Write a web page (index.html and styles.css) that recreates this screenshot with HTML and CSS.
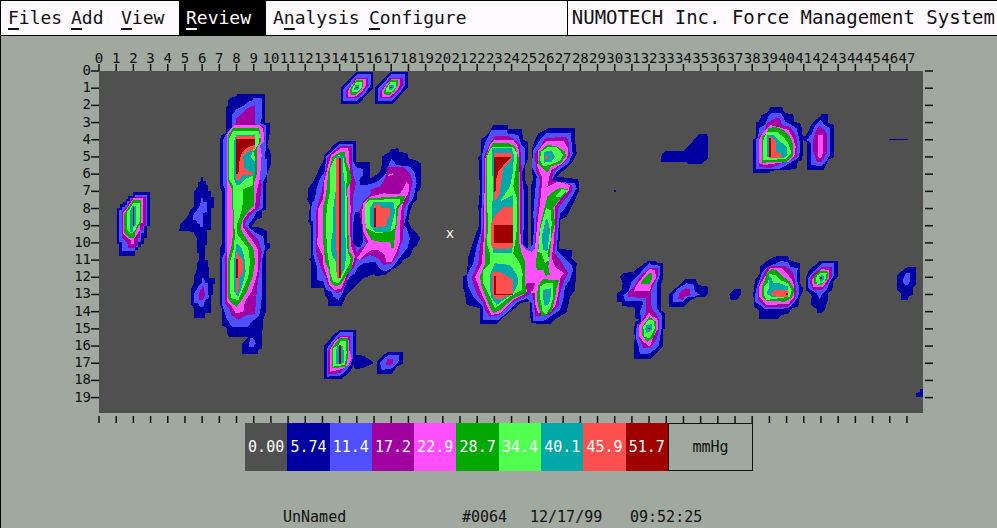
FILE: index.html
```html
<!DOCTYPE html>
<html lang="en">
<head>
  <meta charset="UTF-8">
  <meta name="viewport" content="width=device-width, initial-scale=1.0">
  <title>NUMOTECH Inc. Force Management System</title>
  <link rel="stylesheet" href="styles.css">
</head>
<body>

  <header class="menubar">
    <nav class="menu">
      <button type="button"><u>F</u>iles</button>
      <button type="button"><u>A</u>dd</button>
      <button type="button"><u>V</u>iew</button>
      <button type="button" class="active"><u>R</u>eview</button>
      <button type="button">A<u>n</u>alysis</button>
      <button type="button"><u>C</u>onfigure</button>
    </nav>
    <h1 class="title">NUMOTECH Inc. Force Management System</h1>
  </header>

  <main>
    <svg class="chart" viewBox="1 36 996 387" role="img" aria-label="Pressure map">
      <rect class="c0" x="99" y="71" width="824" height="342"/>
      <g id="axes"></g>

      <g class="map">
        <!-- columns 2 and 6 -->
        <g transform="translate(70 170) scale(.3333)">
          <polygon class="c1" points="188,67 240,67 240,167 231,167 231,205 222,205 222,222 214,222 214,232 205,232 205,240 196,240 196,258 147,258 147,222 142,222 142,115 150,115 150,103 158,103 158,95 167,95 167,87 175,87 175,78 188,78"/>
          <polygon class="c2" points="196,76 231,76 231,167 222,167 222,188 214,188 214,215 205,215 205,230 196,230 196,244 155,244 155,215 147,215 147,120 155,120 155,112 164,112 164,104 172,104 172,92 180,92 180,84 196,84"/>
          <polygon class="c3" points="196,80 227,80 227,167 218,167 218,180 210,180 210,205 205,205 205,222 193,235 175,235 172,218 155,200 155,125 172,108 180,90"/>
          <polygon class="c4" points="190,85 218,85 218,160 210,160 210,180 200,195 193,205 193,222 184,222 184,212 167,200 159,190 159,128 168,118 180,100"/>
          <polygon class="c5" points="190,90 214,90 214,158 205,170 197,185 193,205 180,205 163,190 163,130 180,105"/>
          <polygon class="c6" points="190,100 210,100 210,155 200,170 196,180 190,188 180,188 172,180 172,125 184,108"/>
          <polygon class="c7" points="197,107 197,165 190,170 190,185 180,185 180,122 188,107"/>
          <polygon class="c9" points="188,112 193,112 193,167 188,167"/>
          <polygon class="c1" points="392,20 400,20 400,33 409,33 409,45 414,45 414,62 422,62 422,80 432,80 432,115 422,115 422,180 412,180 412,225 405,225 405,270 414,270 414,290 418,290 418,325 436,325 436,342 430,342 430,375 422,375 422,430 405,430 405,445 372,445 372,415 362,400 362,360 372,340 372,320 380,300 380,285 388,270 388,250 380,250 380,205 370,185 328,183 330,165 345,150 355,135 362,118 372,110 372,65 384,50 384,38 392,33"/>
          <polygon class="c2" points="393,85 400,85 400,95 410,95 410,125 400,130 400,172 390,172 390,162 382,160 378,150 370,150 370,135 378,125 388,110 393,95"/>
          <polygon class="c2" points="395,325 403,325 405,340 414,340 416,385 405,390 400,410 390,410 385,400 372,398 372,372 385,350 395,340"/>
          <polygon class="c3" points="395,347 400,347 405,375 398,390 386,390 386,370 395,355"/>
        </g>

        <!-- column 8 -->
        <g transform="translate(210 85) scale(.3333)">
          <polygon class="c1" points="82,27 165,27 165,115 180,115 180,145 172,180 182,205 182,240 170,270 168,375 155,378 155,400 142,402 125,425 150,428 170,438 170,475 180,475 180,488 168,500 168,680 160,705 157,742 157,790 145,795 145,808 97,808 97,775 115,757 60,757 50,745 50,728 35,722 35,670 30,660 30,490 35,480 35,320 30,310 30,162 35,150 47,145 47,70 55,60 55,45 65,38 82,32"/>
          <polygon class="c2" points="130,38 155,38 155,100 150,115 168,120 168,180 165,220 172,225 172,265 160,290 158,370 140,380 130,400 115,420 118,430 140,445 160,455 165,490 155,530 155,640 150,685 140,700 125,710 115,725 65,725 50,700 35,655 35,520 45,500 45,310 38,300 38,165 50,145 65,130 65,90 80,72 100,62 115,50 130,45"/>
          <polygon class="c2" points="122,758 132,762 137,775 130,788 118,785 118,772"/>
          <polygon class="c3" points="135,60 135,118 160,122 165,165 150,180 150,280 155,300 148,370 130,380 110,405 105,420 120,440 145,465 155,500 148,560 140,620 135,688 110,690 85,705 65,690 60,675 45,655 45,520 50,500 50,150 65,140 78,115 78,100 95,88 110,70"/>
          <polygon class="c4" points="75,120 150,120 160,130 162,170 150,180 155,210 150,280 140,320 135,370 115,385 100,405 98,425 115,450 130,470 145,495 145,550 135,590 125,620 105,650 100,680 78,685 65,665 50,650 50,150 60,135"/>
          <polygon class="c5" points="70,130 148,130 153,170 140,190 140,270 133,290 132,360 110,385 97,405 92,430 105,455 130,490 135,530 128,575 110,620 95,645 80,665 65,655 55,640 55,520 65,480 70,440 65,310 55,290 55,150"/>
          <polygon class="c6" points="70,137 145,137 150,150 145,180 130,200 135,220 130,270 130,300 100,312 97,370 88,400 80,420 80,445 95,465 115,490 120,530 115,575 100,610 85,645 65,640 60,620 60,530 72,490 75,440 72,420 68,300 58,285 58,160"/>
          <polygon class="c7" points="78,150 135,150 135,180 128,200 122,215 135,230 135,270 110,280 90,300 78,300 72,280 72,170"/>
          <polygon class="c7" points="80,475 95,490 103,515 107,560 98,600 85,635 72,620 72,530"/>
          <polygon class="c8" points="78,153 135,153 135,190 115,200 100,215 103,250 125,262 130,268 95,272 90,285 78,285"/>
          <polygon class="c9" points="78,163 135,163 135,178 110,190 95,205 88,230 85,268 78,268"/>
          <polygon class="c8" points="78,495 85,510 97,520 100,560 88,580 85,620 78,625"/>
          <polygon class="c9" points="78,522 83,522 83,578 78,578"/>
        </g>

        <!-- columns 13 to 18 -->
        <g transform="translate(300 65) scale(.3333)">
          <g id="spot">
            <polygon class="c1" points="170,20 220,20 220,70 205,85 195,95 175,118 122,118 122,68 140,50 155,35"/>
            <polygon class="c2" points="170,28 212,28 212,60 195,85 170,108 130,108 130,72 150,52"/>
            <polygon class="c3" points="165,38 205,38 205,62 190,82 172,98 138,100 138,78 155,58"/>
            <polygon class="c4" points="170,42 198,42 198,60 188,78 165,95 143,95 143,78 155,60"/>
            <polygon class="c5" points="168,45 190,45 190,62 180,78 165,90 150,88 150,75"/>
            <polygon class="c6" points="168,52 185,52 185,68 172,82 155,82 155,72"/>
            <polygon class="c7" points="165,60 178,60 178,70 170,76 163,74"/>
            <polygon class="c9" points="168,66 173,66 173,70 168,70"/>
          </g>
          <use href="#spot" x="103"/>
          <polygon class="c1" points="118,228 168,228 168,290 208,292 210,285 210,340 222,335 240,320 245,300 245,275 270,260 272,252 295,250 298,260 322,265 325,280 345,285 362,295 362,370 350,385 350,405 340,415 330,440 325,470 332,485 340,495 352,505 360,520 352,540 340,550 330,575 310,585 300,600 275,615 255,630 225,633 220,628 190,640 175,655 160,670 140,690 125,722 85,722 85,705 75,690 72,670 32,668 32,588 25,585 32,578 32,480 25,470 30,420 22,405 25,370 40,350 50,330 60,305 70,290 72,270 85,260 100,240"/>
          <polygon class="c2" points="120,236 160,236 160,290 170,308 190,312 190,330 178,345 180,360 212,358 240,345 258,325 268,295 275,282 290,300 330,305 345,325 350,355 340,400 325,420 320,450 312,480 320,490 330,520 322,550 305,570 290,590 275,610 255,620 240,612 225,590 190,595 175,605 165,625 150,635 140,650 125,690 115,705 100,695 95,680 78,675 70,650 50,645 50,600 40,570 40,470 32,465 35,415 45,400 50,370 60,340 75,320 78,275 95,260"/>
          <polygon class="c1" points="165,440 180,440 190,490 190,530 180,548 160,540 158,490"/>
          <polygon class="c3" points="122,243 155,243 155,290 160,330 168,355 160,390 158,430 155,520 165,545 175,575 160,610 148,620 140,650 125,680 110,685 100,675 85,665 78,640 68,620 60,600 48,560 48,440 55,415 65,380 75,330 82,280 95,262"/>
          <polygon class="c4" points="122,250 145,250 148,290 152,340 150,390 152,430 150,500 155,550 165,575 155,610 140,630 125,670 105,675 88,660 80,630 70,600 68,570 52,540 55,430 70,400 72,350 85,300 95,270"/>
          <polygon class="c5" points="120,262 135,262 138,290 150,320 155,345 140,375 143,400 145,430 145,500 148,560 160,575 155,610 140,630 120,660 105,665 92,650 85,610 75,590 72,550 68,520 68,430 78,390 85,320 98,275"/>
          <polygon class="c6" points="115,270 130,275 135,300 142,330 138,370 140,400 140,500 143,560 152,580 148,600 135,620 125,640 115,655 100,650 92,630 88,600 82,560 78,500 80,430 90,380 90,310 105,280"/>
          <polygon class="c7" points="108,272 128,272 130,320 136,370 136,500 138,570 135,610 122,635 110,630 108,590 95,570 93,530 100,490 100,430 108,370"/>
          <polygon class="c8" points="108,278 123,278 123,638 112,638 108,500"/>
          <polygon class="c9" points="118,278 122,278 122,638 118,638"/>
          <polygon class="c3" points="262,305 310,305 330,325 338,350 330,385 325,410 312,430 310,520 300,545 295,570 275,595 250,600 235,580 210,570 190,580 170,585 165,570 180,550 200,540 190,510 185,480 178,440 190,410 215,385 210,375 240,365 258,335"/>
          <polygon class="c4" points="262,330 280,324 280,328 265,334"/>
          <polygon class="c4" points="320,350 328,360 325,385 312,405 305,430 300,480 300,530 290,560 275,590 258,590 255,570 235,555 215,555 200,565 180,585 170,580 185,560 205,530 190,500 185,450 190,415 210,395 250,385 300,388"/>
          <polygon class="c5" points="205,400 315,393 310,410 295,430 290,480 285,500 282,550 275,550 270,530 235,530 215,525 200,500 195,470 195,420"/>
          <polygon class="c6" points="208,405 300,402 300,415 288,430 288,470 285,490 270,500 230,505 200,490 195,470 195,420"/>
          <polygon class="c7" points="220,412 280,412 285,440 275,480 270,500 225,500 210,480 210,430"/>
          <polygon class="c8" points="222,420 240,418 245,430 270,430 270,455 262,460 260,480 245,487 222,487"/>
          <polygon class="c9" points="222,430 228,430 228,485 222,485"/>
        </g>
        <g transform="translate(300 225) scale(.3333)">
          <polygon class="c1" points="120,315 168,315 168,390 190,392 210,405 220,415 205,422 185,430 165,432 160,420 150,440 125,462 72,462 72,360 85,350 100,330"/>
          <polygon class="c2" points="120,322 158,322 158,400 152,420 135,440 120,452 80,455 80,372 100,345"/>
          <polygon class="c3" points="118,333 150,333 152,410 140,420 120,445 85,447 85,375 105,345"/>
          <polygon class="c4" points="120,337 145,337 148,375 155,400 145,420 130,430 115,435 90,440 90,375 105,350"/>
          <polygon class="c5" points="118,340 143,340 143,400 138,425 95,430 95,370"/>
          <polygon class="c6" points="122,348 138,348 140,385 135,420 100,425 100,368 115,362"/>
          <polygon class="c7" points="110,362 130,362 132,415 108,417"/>
          <polygon class="c9" points="117,360 123,360 123,417 117,417"/>
          <polygon class="c1" points="265,380 310,380 310,415 290,425 275,447 230,447 230,410 245,395"/>
          <polygon class="c2" points="265,390 298,390 295,412 275,430 245,435 240,412"/>
          <polygon class="c3" points="262,402 280,402 280,415 268,422 258,418"/>
        </g>

        <!-- columns 22 to 27 -->
        <g transform="translate(460 120) scale(.3333)">
          <polygon class="c1" points="100,15 145,15 145,28 185,28 190,60 203,65 203,120 195,140 195,180 203,200 205,385 212,385 212,200 218,180 215,90 225,60 235,40 265,25 345,25 345,60 350,100 335,130 320,145 300,160 290,170 355,178 358,210 345,240 330,270 320,290 300,300 298,387 335,390 335,415 350,430 345,510 330,530 320,577 290,595 270,612 212,610 210,543 180,550 170,560 120,600 110,612 60,612 60,565 20,555 15,520 8,500 8,470 20,465 25,410 35,380 50,335 58,315 55,260 60,210 55,110 62,105 62,60 85,40"/>
          <polygon class="c2" points="95,30 140,30 140,40 175,45 185,75 195,85 195,130 185,160 192,220 190,375 200,385 218,375 222,330 220,280 225,220 230,170 215,140 220,90 240,60 260,40 332,40 338,100 325,130 290,155 275,180 290,185 345,190 350,205 330,240 315,265 300,280 295,330 290,390 300,400 335,435 340,450 330,480 315,500 310,540 300,570 270,590 250,603 220,603 215,550 200,535 175,545 150,570 115,600 70,600 70,560 40,530 25,500 20,465 40,430 50,380 62,340 65,250 65,110 75,70"/>
          <polygon class="c3" points="105,48 145,48 165,60 180,75 185,140 185,375 198,395 215,400 225,380 228,300 235,240 240,180 228,150 225,100 245,75 255,55 315,50 325,60 330,110 310,130 280,155 275,180 335,195 335,215 310,245 295,265 290,330 285,400 300,420 325,460 315,475 300,520 295,560 270,585 225,590 222,545 215,520 195,530 160,545 120,585 90,590 75,570 70,550 50,520 35,475 55,430 60,380 70,310 72,110 90,70"/>
          <polygon class="c4" points="105,60 160,60 175,80 178,120 182,370 200,390 215,395 225,385 232,310 240,250 245,200 245,170 232,140 235,90 260,62 310,62 325,85 322,115 300,135 275,150 268,170 262,200 295,185 330,195 325,215 300,240 285,260 285,320 280,380 275,415 285,440 312,460 300,475 295,520 285,560 265,580 235,580 225,550 225,520 200,515 190,525 160,540 120,580 95,585 80,555 60,510 45,470 65,430 70,380 72,330 75,120 90,75"/>
          <polygon class="c3" points="200,490 225,490 220,510 205,520 198,505"/>
          <polygon class="c5" points="100,68 140,68 165,78 178,120 178,370 185,400 195,425 197,520 160,535 120,570 100,580 85,550 65,500 60,470 75,430 75,380 78,330 78,110 90,85"/>
          <polygon class="c6" points="95,82 160,82 172,100 170,130 160,200 172,240 172,320 165,370 160,400 180,430 188,460 185,510 150,530 125,550 105,565 90,530 70,490 70,450 90,430 90,400 80,370 85,315 80,240 80,110"/>
          <polygon class="c7" points="97,85 155,85 162,105 158,160 150,200 120,245 160,225 160,260 158,315 157,400 100,400 95,370 95,260 98,240"/>
          <polygon class="c7" points="105,430 150,435 172,465 175,490 160,520 130,540 110,555 92,530 90,465"/>
          <polygon class="c8" points="103,100 157,100 157,115 130,145 122,200 118,225 103,245"/>
          <polygon class="c9" points="103,110 155,110 140,125 115,155 108,180 108,213 103,215"/>
          <polygon class="c8" points="105,285 130,262 158,262 158,385 100,388 92,375 92,315"/>
          <polygon class="c9" points="103,315 158,315 158,370 103,370"/>
          <polygon class="c8" points="95,460 105,455 125,458 160,480 160,520 125,537 105,537 95,515"/>
          <polygon class="c9" points="102,468 107,468 107,521 158,521 158,526 102,526"/>
          <polygon class="c5" points="262,75 290,78 315,95 318,110 300,130 272,140 262,158 250,145 235,130 238,95"/>
          <polygon class="c6" points="265,80 290,80 310,105 300,122 270,135 250,138 240,120 243,95"/>
          <polygon class="c7" points="252,95 275,93 285,110 275,125 252,128"/>
          <polygon class="c8" points="256,108 266,108 262,118 256,118"/>
          <polygon class="c5" points="300,203 325,208 315,225 298,240 280,262 285,310 275,350 270,400 265,440 270,465 258,467 250,450 230,450 228,425 235,380 240,320 252,270 262,230 280,215"/>
          <polygon class="c6" points="305,208 325,210 300,232 285,232"/>
          <polygon class="c6" points="258,265 272,270 275,310 272,360 262,400 268,420 255,430 245,400 235,395 240,330"/>
          <polygon class="c7" points="258,295 264,300 270,330 262,395 250,390 245,350"/>
          <polygon class="c8" points="257,315 262,315 262,332 257,330"/>
          <polygon class="c5" points="250,478 298,480 290,500 285,535 275,575 245,590 235,560 230,530 235,495"/>
          <polygon class="c6" points="240,500 255,490 280,490 280,530 272,560 258,585 248,575 240,530"/>
          <polygon class="c7" points="250,510 272,505 272,530 268,550 255,560 248,530"/>
          <polygon class="c8" points="256,520 262,520 262,526 256,526"/>
        </g>

        <!-- columns 30 to 37 -->
        <g transform="translate(610 125) scale(.3333)">
          <polygon class="c1" points="270,27 290,27 294,35 294,100 275,117 235,117 230,112 152,112 152,95 165,78 220,78 240,60 255,40"/>
          <polygon class="c1" points="11,195 18,195 18,202 11,202"/>
          <polygon class="c1" points="115,407 135,407 140,413 158,413 158,465 152,480 152,555 165,565 165,610 158,615 158,665 140,685 120,702 72,702 72,650 75,640 72,620 75,590 90,585 75,580 75,548 35,542 35,530 22,530 22,505 35,495 38,475 30,455 40,445 70,440 90,425"/>
          <polygon class="c2" points="118,413 125,420 150,422 150,450 140,480 142,550 155,570 155,610 150,640 145,665 120,685 90,688 85,660 78,640 80,600 95,590 90,560 100,535 95,528 45,528 40,510 55,500 65,470 85,450"/>
          <polygon class="c3" points="120,428 143,428 143,455 130,480 122,500 125,550 145,575 148,610 140,640 120,670 100,670 88,640 85,600 100,580 108,560 108,520 55,515 55,502 75,480 90,455"/>
          <polygon class="c4" points="118,432 135,435 138,460 125,478 120,497 72,497 80,480 95,460"/>
          <polygon class="c4" points="118,562 125,575 142,580 145,610 130,635 120,665 100,650 88,635 88,600 105,580"/>
          <polygon class="c5" points="118,443 125,445 125,465 118,478 92,478 98,465"/>
          <polygon class="c5" points="118,575 138,590 138,615 128,640 112,650 95,630 95,605 108,590"/>
          <polygon class="c6" points="115,585 130,585 135,610 120,640 102,635 100,605"/>
          <polygon class="c7" points="110,600 125,598 125,615 112,625 105,612"/>
          <polygon class="c9" points="114,608 119,608 119,613 114,613"/>
          <polygon class="c1" points="225,463 258,463 265,480 293,485 293,505 285,515 260,517 235,530 220,547 178,547 178,507 190,495 212,478"/>
          <polygon class="c2" points="230,475 250,478 255,500 270,508 255,515 235,515 218,530 190,532 190,508 205,490"/>
          <polygon class="c3" points="225,490 240,492 242,510 225,515 218,525 205,522 207,505"/>
          <polygon class="c1" points="375,492 394,492 394,508 380,524 362,524 358,508"/>
        </g>

        <!-- columns 38 to 43 -->
        <g transform="translate(745 100) scale(.3333)">
          <polygon class="c1" points="75,22 112,22 115,33 125,40 145,42 147,65 165,70 172,85 172,105 180,110 190,95 198,75 205,65 225,50 230,42 250,42 250,68 268,75 268,170 250,180 235,210 185,210 185,125 175,120 172,180 158,185 155,205 130,210 75,212 75,218 25,218 25,118 32,115 32,68 42,65 50,45 70,35"/>
          <polygon class="c2" points="80,38 105,38 115,50 120,65 140,75 155,85 160,105 165,130 163,170 150,180 125,195 100,208 32,208 32,120 40,110 42,85 60,75 70,50"/>
          <polygon class="c2" points="228,60 238,75 255,85 255,165 240,190 228,198 198,195 198,130 185,120 200,100 212,75"/>
          <polygon class="c3" points="90,55 105,55 110,75 135,80 150,100 158,130 155,170 140,180 110,190 80,203 42,202 42,110 60,90 65,70"/>
          <polygon class="c3" points="222,78 238,90 245,100 245,160 230,185 215,185 205,155 203,125 212,95"/>
          <polygon class="c4" points="75,75 95,80 130,90 145,115 152,140 148,170 130,185 60,195 42,190 42,120 52,100"/>
          <polygon class="c4" points="218,105 235,105 235,155 228,175 218,170"/>
          <polygon class="c5" points="70,85 90,80 115,90 135,110 145,135 145,165 125,185 50,188 50,110 65,100"/>
          <polygon class="c6" points="65,95 95,95 115,110 130,130 140,160 125,175 110,178 55,180 55,120"/>
          <polygon class="c7" points="65,105 85,105 100,120 125,140 128,165 115,175 65,172"/>
          <polygon class="c8" points="72,108 82,112 92,125 92,155 108,160 108,173 72,173"/>
          <polygon class="c9" points="72,115 77,115 77,172 72,172"/>
          <polygon class="c1" points="95,468 130,468 132,480 165,490 165,550 175,565 172,580 165,590 160,620 140,625 130,640 110,645 95,658 42,658 42,630 27,620 25,580 30,540 45,520 45,500 70,480"/>
          <polygon class="c2" points="110,483 130,488 135,500 158,505 155,540 163,560 160,590 145,610 130,625 60,628 45,615 30,605 32,570 40,550 50,520 70,500"/>
          <polygon class="c3" points="70,498 120,497 130,505 145,520 150,545 155,575 150,600 130,620 60,620 40,600 40,560 48,540"/>
          <polygon class="c4" points="75,505 110,505 130,525 145,545 148,590 130,612 65,615 42,590 42,560 60,530"/>
          <polygon class="c5" points="80,507 95,510 115,530 135,545 148,570 140,595 120,605 65,603 50,590 50,560 60,540 65,520"/>
          <polygon class="c6" points="72,522 90,525 105,540 130,550 140,570 135,590 65,600 57,585 57,560 70,545"/>
          <polygon class="c7" points="72,528 80,535 85,550 105,550 130,560 130,590 80,590 65,580 72,565"/>
          <polygon class="c8" points="90,570 130,570 130,590 95,590 75,582"/>
          <polygon class="c9" points="122,578 128,578 128,586 122,586"/>
          <polygon class="c1" points="225,483 278,483 278,530 265,545 262,570 250,580 248,600 240,630 230,640 218,640 215,628 198,615 200,590 195,580 182,570 182,535 190,515 205,500"/>
          <polygon class="c2" points="232,490 268,490 268,525 255,545 245,570 230,585 225,600 215,580 190,565 190,535 205,515"/>
          <polygon class="c3" points="230,500 262,500 260,530 245,555 230,570 205,570 195,550 198,530"/>
          <polygon class="c4" points="228,507 252,510 252,535 235,560 205,562 200,540"/>
          <polygon class="c5" points="225,512 248,515 248,535 230,555 208,552 207,530"/>
          <polygon class="c6" points="228,518 245,520 240,545 220,553 212,545 215,528"/>
          <polygon class="c7" points="222,528 235,525 238,540 225,548"/>
          <polygon class="c9" points="226,531 232,531 232,537 226,537"/>
        </g>

        <!-- right edge -->
        <g transform="translate(860 100) scale(.3333)">
          <polygon class="c1" points="87,117 144,117 144,121 87,121"/>
          <polygon class="c1" points="142,501 167,501 167,555 158,562 158,585 145,590 143,600 124,600 124,582 112,570 110,530 118,518 130,510"/>
          <polygon class="c2" points="138,518 149,520 149,545 142,557 130,550 130,535"/>
          <polygon class="c1" points="180,866 190,866 190,890 167,890 167,880 180,876"/>
        </g>
      </g>

      <text class="cursor" x="450" y="238">x</text>
    </svg>

    <ul class="legend">
      <li class="s0">0.00</li>
      <li class="s1">5.74</li>
      <li class="s2">11.4</li>
      <li class="s3">17.2</li>
      <li class="s4">22.9</li>
      <li class="s5">28.7</li>
      <li class="s6">34.4</li>
      <li class="s7">40.1</li>
      <li class="s8">45.9</li>
      <li class="s9">51.7</li>
      <li class="unit">mmHg</li>
    </ul>
  </main>

  <footer class="status">
    <span>UnNamed</span>
    <span>#0064</span>
    <span>12/17/99</span>
    <span>09:52:25</span>
  </footer>

  <script>
    const axes = document.querySelector('#axes');
    const left = 99, top0 = 71, step = 17.19;
    let html = '';

    function tick(x1, y1, x2, y2) {
      return `<line x1="${x1}" y1="${y1}" x2="${x2}" y2="${y2}"/>`;
    }

    // columns
    for (let i = 0; i < 48; i++) {
      const x = left + i * step;
      html += tick(x, 64, x, 71) + tick(x, 416, x, 423);
      html += `<text x="${x}" y="63" text-anchor="middle">${i}</text>`;
    }

    // rows
    for (let i = 0; i < 20; i++) {
      const y = top0 + i * step;
      html += tick(91, y, 99, y) + tick(925, y, 933, y);
      html += `<text x="91" y="${y + 4}" text-anchor="end">${i}</text>`;
    }

    axes.innerHTML = html;
  </script>
</body>
</html>
```
FILE: styles.css
```css
* {
  box-sizing: border-box;
}

body {
  margin: 0;
  min-height: 100vh;
  background: #a0a8a0;
  border-top: 1px solid #000;
  border-left: 1px solid #000;
  font-family: "DejaVu Sans Mono", monospace;
  font-size: 15px;
  color: #111;
}

.menubar {
  display: flex;
  justify-content: space-between;
  height: 35px;
  background: #fffaff;
  border-bottom: 1px solid #000;
}

.menu {
  display: grid;
  grid-template-columns: 63px 50px 65px 87px 96px auto;
}

.menu button {
  padding: 0 0 2px 7px;
  border: none;
  background: none;
  color: #111;
  font-family: inherit;
  font-size: 18px;
  text-align: left;
  white-space: nowrap;
  cursor: pointer;
}

.menu u {
  text-decoration-thickness: 2px;
  text-underline-offset: 4px;
}

.menu .active {
  background: #000;
  color: #fffaff;
}

.title {
  margin: 0;
  padding: 0 2px 0 4px;
  border-left: 1px solid #000;
  font-size: 19px;
  font-weight: normal;
  line-height: 33px;
  white-space: nowrap;
}

.chart {
  display: block;
  width: 100%;
}

.chart line {
  stroke: #111;
  stroke-width: 1.5;
}

.chart text {
  font-size: 14px;
  fill: #111;
}

.chart .cursor {
  fill: #fff;
  text-anchor: middle;
}

.map {
  shape-rendering: crispEdges;
}

.c0 { fill: #505050; }
.c1 { fill: #0000a0; }
.c2 { fill: #5050ff; }
.c3 { fill: #a000a0; }
.c4 { fill: #ff50ff; }
.c5 { fill: #00a800; }
.c6 { fill: #50ff50; }
.c7 { fill: #00a8a8; }
.c8 { fill: #ff5050; }
.c9 { fill: #a00000; }

.legend {
  display: grid;
  grid-template-columns: repeat(10, 1fr) 85px;
  width: 508px;
  margin: 0 auto;
  padding: 0;
  list-style: none;
  color: #fff;
  line-height: 48px;
  text-align: center;
}

.s0 { background: #505050; }
.s1 { background: #0000a0; }
.s2 { background: #5050ff; }
.s3 { background: #a000a0; }
.s4 { background: #ff50ff; }
.s5 { background: #00a800; }
.s6 { background: #50ff50; }
.s7 { background: #00a8a8; }
.s8 { background: #ff5050; }
.s9 { background: #a00000; }

.unit {
  border: 1px solid #111;
  color: #111;
  line-height: 46px;
}

.status {
  display: grid;
  grid-template-columns: 179px 68px 100px auto;
  width: 508px;
  margin: 0 auto;
  padding: 36px 0 0 38px;
  line-height: 20px;
}
```
